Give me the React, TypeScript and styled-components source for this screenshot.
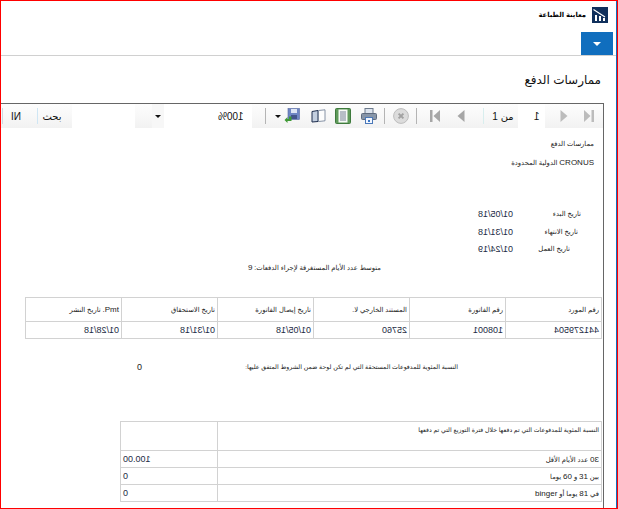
import React from "react";
import styled, { createGlobalStyle } from "styled-components";

const Global = createGlobalStyle`
  html, body { margin: 0; padding: 0; background: #fff; }
  * { box-sizing: border-box; }
  body { font-family: "Liberation Sans", "DejaVu Sans", sans-serif; color: #111; }
`;

const Frame = styled.div`
  width: 618px; height: 509px; border: 1px solid #f00; overflow: hidden; background: #fff;
`;
const Inner = styled.div`
  height: 100%; display: flex; flex-direction: column; border-right: 1px solid #106ebe;
`;
const TopBar = styled.header`
  height: 31px; display: flex; justify-content: flex-end; align-items: center; gap: 6px;
  padding: 0 8px 4px 0; flex: none;
`;
const AppTitle = styled.div`font-size: 6.8px; font-weight: 700; color: #000;`;
const RibbonBar = styled.div`
  height: 24px; flex: none; display: flex; justify-content: flex-end; padding-right: 3px; border-bottom: 1px solid #d0d0d0;
`;
const RibbonButton = styled.div`
  width: 32px; height: 23px; background: #106ebe; display: flex; align-items: center; justify-content: center;
`;
const Caret = styled.span`
  width: 0; height: 0; border-left: 4px solid transparent; border-right: 4px solid transparent;
  border-top: 4px solid #fff; margin-top: 1px;
`;
const PageTitle = styled.h1`
  height: 47px; flex: none; margin: 0; font-size: 12px; font-weight: 400; color: #111;
  display: flex; align-items: center; justify-content: flex-end; padding: 0 15px 0 0;
`;
const Report = styled.section`
  width: 603px; flex: 1; min-height: 0; display: flex; flex-direction: column;
  border-top: 1px solid #666; border-right: 1px solid #666;
`;
const Toolbar = styled.div`
  height: 24px; flex: none; display: flex; align-items: center; white-space: nowrap;
  background: linear-gradient(#fdfdfd, #f2f2f2);
`;
const Sep = styled.span<{ $ml: number; $tone?: string }>`
  width: 1px; height: 16px; flex: none; margin-left: ${p => p.$ml}px; background: ${p => p.$tone ?? "#b4b4b4"};
`;
const Tool = styled.span<{ $ml: number; $w: number }>`
  width: ${p => p.$w}px; margin-left: ${p => p.$ml}px; flex: none; display: flex; align-items: center; justify-content: center;
  font-size: 10px; color: #111;
`;
const ToolField = styled.span<{ $ml: number; $w: number; $pr?: number }>`
  width: ${p => p.$w}px; margin-left: ${p => p.$ml}px; height: 24px; flex: none; background: #fff;
  display: flex; align-items: center; justify-content: flex-end; padding-right: ${p => p.$pr ?? 8}px; font-size: 10px; color: #111;
`;
const DropTab = styled.span<{ $ml: number }>`
  width: 12px; height: 24px; margin-left: ${p => p.$ml}px; flex: none; background: #f7f7f7;
  display: flex; align-items: center; justify-content: center;
`;
const SmallCaret = styled.span`
  width: 0; height: 0; border-left: 3px solid transparent; border-right: 3px solid transparent; border-top: 3px solid #111;
`;
const Mirror = styled.span`display: inline-block; transform: scaleX(-1); unicode-bidi: isolate; direction: ltr;`;
const Latin = styled.span`font-size: 8px;`;
const Body = styled.div`
  flex: 1; min-height: 0; overflow: hidden; font-size: 6.8px; color: #222; line-height: 12px;
`;
const ReportLine = styled.div<{ $mt: number; $pr: number; $size?: number }>`
  margin-top: ${p => p.$mt}px; margin-right: ${p => p.$pr}px;
  text-align: right; font-size: ${p => p.$size ?? 6.8}px;
`;
const DateBlock = styled.div`margin-top: 39px; padding-left: 477px; display: grid; row-gap: 5.5px;`;
const DateRow = styled.div`display: grid; grid-template-columns: 36px 1fr; height: 12px;`;
const DateLabel = styled.span<{ $pr: number }>`text-align: right; margin-right: ${p => p.$pr}px;`;
const Value = styled.span`font-size: 9px; color: #1d2b44;`;
const DataTable = styled.table<{ $ml: number; $w: number; $mt: number }>`
  margin: ${p => p.$mt}px 0 0 ${p => p.$ml}px; width: ${p => p.$w}px; border-collapse: collapse; table-layout: fixed;
`;
const Cell = styled.td<{ $h: number; $top?: boolean; $left?: boolean; $size?: number }>`
  height: ${p => p.$h}px; padding: ${p => (p.$top ? "2px" : "0")} 2px 0 2px; border: 1px solid #d2d2d2;
  text-align: ${p => (p.$left ? "left" : "right")}; vertical-align: ${p => (p.$top ? "top" : "middle")};
  font-size: ${p => p.$size ?? 6.8}px; line-height: 11px; color: #222;
`;
const PercentLine = styled.div`
  margin-top: 22px; height: 12px; display: flex; justify-content: space-between; padding: 0 145px 0 136px; font-size: 6.25px;
`;
const Zero = styled.span`font-size: 9px;`;
const NarrowCol = styled.col`width: 97px;`;
const Gap = styled.span`flex: 1;`;

const Logo = () => (
  <svg width="16" height="16" viewBox="0 0 16 16"><rect width="16" height="16" fill="#10305c" />
    <path d="M1.5 2.5 L13 10" stroke="#fff" strokeWidth="1.2" fill="none" />
    <path d="M3 8h2v6H3zM7 9h2v5H7zM11 11h2v3h-2z" fill="#fff" /></svg>
);
const Save = () => (
  <svg width="16" height="16" viewBox="0 0 16 16"><rect x="4" y="0.5" width="11.5" height="11" fill="#6f86c4" stroke="#5568a0" strokeWidth=".6" />
    <rect x="7" y="1" width="6" height="4" fill="#dfe6f5" /><rect x="7" y="7" width="6" height="4" fill="#44558c" />
    <path d="M7.5 8.5 L7.5 13 L3.5 13 L3.5 15 L0.5 12 L3.5 9 L3.5 11 L5 11 L5 8.5z" fill="#3f9a35" /></svg>
);
const Book = () => (
  <svg width="15" height="14" viewBox="0 0 15 14"><path d="M1 2.5 L7 1.5 V12.5 L1 13z" fill="#c3cfe0" stroke="#1d2d4d" strokeWidth="1" />
    <path d="M7.5 1.5 L14 0.8 V11.8 L7.5 12.5z" fill="#fdfdfd" stroke="#6a7890" strokeWidth=".8" /></svg>
);
const Doc = () => (
  <svg width="16" height="16" viewBox="0 0 16 16"><rect x=".5" y=".5" width="15" height="15" rx="1" fill="#5f9a5a" stroke="#3e7a3d" />
    <rect x="3.5" y="1.5" width="9" height="13" fill="#f7faf7" />
    <path d="M5 4h6M5 6h6M5 8h6M5 10h6M5 12h6" stroke="#66758a" strokeWidth=".9" /></svg>
);
const Printer = () => (
  <svg width="16" height="16" viewBox="0 0 16 16"><rect x="4" y=".5" width="8" height="5" fill="#dde4ee" stroke="#6c7a8c" />
    <rect x=".5" y="5.5" width="15" height="6" rx="1" fill="#8795a8" stroke="#5e6b7e" />
    <rect x="4.5" y="9.5" width="7" height="6" fill="#f4f8ff" stroke="#4b78b8" /><rect x="7" y="12" width="2" height="2" fill="#3c78c8" /></svg>
);
const Stop = () => (
  <svg width="16" height="16" viewBox="0 0 16 16"><circle cx="8" cy="8" r="7.4" fill="#dcdcdc" stroke="#bdbdbd" />
    <path d="M5.6 5.6 L10.4 10.4 M10.4 5.6 L5.6 10.4" stroke="#a2a2a2" strokeWidth="2" /></svg>
);
const First = () => (
  <svg width="10" height="12" viewBox="0 0 10 12"><rect width="2.5" height="12" fill="#a6a6a6" /><path d="M10 0 V12 L3.5 6z" fill="#a6a6a6" /></svg>
);
const Prev = () => <svg width="8" height="12" viewBox="0 0 8 12"><path d="M7.5 0 V12 L0.5 6z" fill="#a6a6a6" /></svg>;
const Next = () => <svg width="8" height="12" viewBox="0 0 8 12"><path d="M.5 0 V12 L7.5 6z" fill="#bcbcbc" /></svg>;
const Last = () => (
  <svg width="10" height="12" viewBox="0 0 10 12"><rect x="7.5" width="2.5" height="12" fill="#bcbcbc" /><path d="M0 0 V12 L6.5 6z" fill="#bcbcbc" /></svg>
);

const heads = ["تاريخ الاستحقاق", "تاريخ إيصال الفاتورة", "المستند الخارجي لا.", "رقم الفاتورة", "رقم المورد"];
const vals = ["01/28/18", "01/31/18", "01/05/18", "25760", "108001", "441279504"];

export default function App() {
  return (
    <Frame>
      <Global />
      <Inner>
        <TopBar>
          <AppTitle dir="rtl">معاينة الطباعة</AppTitle>
          <Logo />
        </TopBar>
        <RibbonBar><RibbonButton><Caret /></RibbonButton></RibbonBar>
        <PageTitle><span dir="rtl">ممارسات الدفع</span></PageTitle>
        <Report>
          <Toolbar>
            <Sep $ml={1} $tone="#cfd8e0" />
            <Tool $ml={0} $w={26}><Mirror>NI</Mirror></Tool>
            <Sep $ml={8} $tone="#cfe6f4" />
            <Tool $ml={6} $w={16}>بحث</Tool>
            <ToolField $ml={12} $w={63} />
            <DropTab $ml={17}><SmallCaret /></DropTab>
            <ToolField $ml={0} $w={88}><Mirror>100%</Mirror></ToolField>
            <Sep $ml={13} />
            <Tool $ml={9} $w={6}><SmallCaret /></Tool>
            <Tool $ml={2} $w={17}><Save /></Tool>
            <Tool $ml={11} $w={15}><Book /></Tool>
            <Tool $ml={9} $w={16}><Doc /></Tool>
            <Tool $ml={10} $w={16}><Printer /></Tool>
            <Sep $ml={7} />
            <Tool $ml={8} $w={16}><Stop /></Tool>
            <Sep $ml={7} />
            <Tool $ml={13} $w={10}><First /></Tool>
            <Tool $ml={17} $w={8}><Prev /></Tool>
            <Sep $ml={18} $tone="#d8eeee" />
            <Tool $ml={9} $w={20}><span>1 من</span></Tool>
            <ToolField $ml={5} $w={27} $pr={5}><Mirror>1</Mirror></ToolField>
            <Tool $ml={15} $w={8}><Next /></Tool>
            <Tool $ml={16} $w={10}><Last /></Tool>
            <Gap />
          </Toolbar>
          <Body>
            <ReportLine dir="rtl" $mt={10} $pr={9}>ممارسات الدفع</ReportLine>
            <ReportLine dir="rtl" $mt={7} $pr={9}><Latin>CRONUS</Latin> الدولية المحدودة</ReportLine>
            <DateBlock>
              <DateRow><Value><Mirror>01/05/18</Mirror></Value><DateLabel dir="ltr" $pr={22}>تاريخ البدء</DateLabel></DateRow>
              <DateRow><Value><Mirror>01/31/18</Mirror></Value><DateLabel dir="ltr" $pr={25}>تاريخ الانتهاء</DateLabel></DateRow>
              <DateRow><Value><Mirror>01/24/19</Mirror></Value><DateLabel dir="ltr" $pr={33}>تاريخ العمل</DateLabel></DateRow>
            </DateBlock>
            <ReportLine dir="rtl" $mt={7} $pr={222} $size={6.8}>متوسط عدد الأيام المستغرقة لإجراء الدفعات: <Latin>9</Latin></ReportLine>
            <DataTable $ml={24} $w={577} $mt={23}>
              <tbody>
                <tr>
                  <Cell $h={24} dir="rtl"><Latin>Pmt.</Latin> تاريخ النشر</Cell>
                  {heads.map(h => <Cell $h={24} key={h} dir="rtl">{h}</Cell>)}
                </tr>
                <tr>
                  {vals.map(v => <Cell $h={17} key={v}><Value><Mirror>{v}</Mirror></Value></Cell>)}
                </tr>
              </tbody>
            </DataTable>
            <PercentLine>
              <Zero>0</Zero>
              <span dir="rtl">النسبة المئوية للمدفوعات المستحقة التي لم تكن لوحة ضمن الشروط المتفق عليها:</span>
            </PercentLine>
            <DataTable $ml={119} $w={482} $mt={48}>
              <colgroup><NarrowCol /><col /></colgroup>
              <tbody>
                <tr><Cell $h={29} /><Cell $h={29} $top $size={6.2} dir="rtl">النسبة المئوية للمدفوعات التي تم دفعها خلال فترة التوزيع التي تم دفعها</Cell></tr>
                <tr><Cell $h={17} $left><Value><Mirror>100.00</Mirror></Value></Cell><Cell $h={17} dir="rtl"><Latin><Mirror>30</Mirror></Latin> عدد الأيام الأقل</Cell></tr>
                <tr><Cell $h={17} $left><Value>0</Value></Cell><Cell $h={17} dir="rtl">بين <Latin>31</Latin> و <Latin>60</Latin> يوما</Cell></tr>
                <tr><Cell $h={17} $left><Value>0</Value></Cell><Cell $h={17} dir="rtl">في <Latin>81</Latin> يوما أو <Latin>binger</Latin></Cell></tr>
              </tbody>
            </DataTable>
          </Body>
        </Report>
      </Inner>
    </Frame>
  );
}
